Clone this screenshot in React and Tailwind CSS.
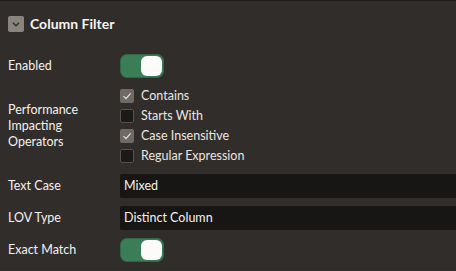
import React from "react";

const font = { fontFamily: "Lato, 'Noto Sans', sans-serif" };

function Toggle() {
  return (
    <div className="w-[44px] h-[24px] rounded-[7px] bg-[#3a7d56] border border-[#2f6a48] flex items-center justify-end pr-[1px]">
      <div className="w-[21px] h-[20px] rounded-[6px] bg-[#fcfbfa]" />
    </div>
  );
}

function Check({ checked, label }) {
  return (
    <div className="flex items-center h-[20px] gap-[7px]">
      {checked ? (
        <div className="w-[14px] h-[14px] rounded-[2px] bg-[#6f6a65] flex items-center justify-center">
          <svg width="10" height="10" viewBox="0 0 10 10" fill="none">
            <path d="M1.5 5.2 L4 7.6 L8.6 2.4" stroke="#e8e5e2" strokeWidth="1.1" />
          </svg>
        </div>
      ) : (
        <div className="w-[14px] h-[14px] rounded-[2px] bg-[#1c1a18] border border-[#57524d]" />
      )}
      <span className="text-[12.5px] text-[#e9e6e3] leading-none">{label}</span>
    </div>
  );
}

function Label({ children }) {
  return <div className="text-[12.5px] text-[#f4f2f0] leading-[16px]">{children}</div>;
}

export default function App() {
  return (
    <div style={font} className="w-full h-[271px] bg-[#312d2a] overflow-hidden">
      <div className="h-[269px] border-t border-[#1f1c1a] border-b border-b-[#2a2724]">
        <div className="flex items-center gap-[6px] pl-[8px] pt-[14px]">
          <div className="w-[16px] h-[16px] rounded-[2px] bg-[#8a847e] flex items-center justify-center">
            <svg width="10" height="10" viewBox="0 0 10 10" fill="none">
              <path d="M2 3.8 L5 6.8 L8 3.8" stroke="#2e2a27" strokeWidth="1.3" />
            </svg>
          </div>
          <div className="text-[14px] font-bold text-[#f6f4f2] leading-[16px] pt-[1px]">Column Filter</div>
        </div>

        <div className="grid grid-cols-[112px_1fr] items-center pl-[8px] mt-[22px]">
          <Label>Enabled</Label>
          <Toggle />

          <div className="flex items-center h-[80px] mt-[8px]">
            <Label>
              Performance
              <br />
              Impacting
              <br />
              Operators
            </Label>
          </div>
          <div className="flex flex-col mt-[8px]">
            <Check checked label="Contains" />
            <Check label="Starts With" />
            <Check checked label="Case Insensitive" />
            <Check label="Regular Expression" />
          </div>

          <div className="mt-[8px]">
            <Label>Text Case</Label>
          </div>
          <div className="mt-[8px] h-[24px] bg-[#171614] rounded-l-[2px] flex items-center pl-[4px] text-[12.5px] text-[#f4f2f0]">
            Mixed
          </div>

          <div className="mt-[8px]">
            <Label>LOV Type</Label>
          </div>
          <div className="mt-[8px] h-[24px] bg-[#171614] rounded-l-[2px] flex items-center pl-[4px] text-[12.5px] text-[#f4f2f0]">
            Distinct Column
          </div>

          <div className="mt-[8px]">
            <Label>Exact Match</Label>
          </div>
          <div className="mt-[8px]">
            <Toggle />
          </div>
        </div>
      </div>
    </div>
  );
}
